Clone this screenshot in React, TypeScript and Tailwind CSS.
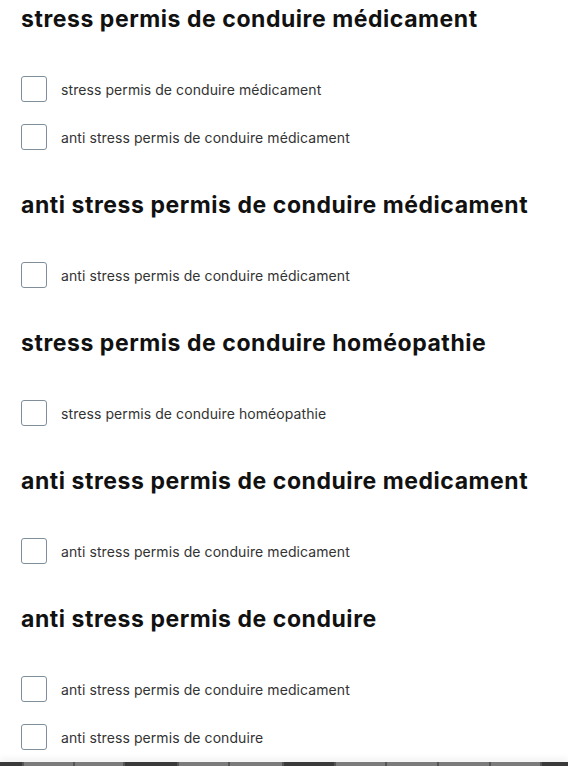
const sections: { title: string; items: string[] }[] = [
  {
    title: "stress permis de conduire médicament",
    items: ["stress permis de conduire médicament", "anti stress permis de conduire médicament"],
  },
  {
    title: "anti stress permis de conduire médicament",
    items: ["anti stress permis de conduire médicament"],
  },
  {
    title: "stress permis de conduire homéopathie",
    items: ["stress permis de conduire homéopathie"],
  },
  {
    title: "anti stress permis de conduire medicament",
    items: ["anti stress permis de conduire medicament"],
  },
  {
    title: "anti stress permis de conduire",
    items: ["anti stress permis de conduire medicament", "anti stress permis de conduire"],
  },
];

// bottom bar segments, dark or light
const segments = [
  { w: 22, dark: true },
  { w: 50, dark: false },
  { w: 48, dark: false },
  { w: 52, dark: true },
  { w: 50, dark: false },
  { w: 52, dark: false },
  { w: 50, dark: true },
  { w: 50, dark: false },
  { w: 50, dark: false },
  { w: 50, dark: false },
  { w: 50, dark: false },
  { w: 26, dark: true },
];

export default function App() {
  return (
    <div className="relative h-[766px] w-[568px] overflow-hidden bg-white font-['Inter',sans-serif]">
      <div className="flex flex-col px-[21px]">
        {sections.map((s, i) => (
          <div key={i} className="flex flex-col pb-[25px]">
            <h2 className="mb-[27px] h-[38px] whitespace-nowrap text-[23px] font-bold leading-[38px] tracking-[0.55px] text-[#111]">
              {s.title}
            </h2>
            {s.items.map((it, j) => (
              <label key={j} className="flex h-12 items-center">
                <span className="h-[26px] w-[26px] shrink-0 rounded-[3px] border border-[#7f8e9b] bg-white" />
                <span className="ml-[14px] text-[14px] tracking-[0.08px] text-[#333]">{it}</span>
              </label>
            ))}
          </div>
        ))}
      </div>
      <div className="absolute bottom-0 left-0 flex h-[4px] w-full gap-[2px] bg-[#555] shadow-[0_-3px_6px_rgba(0,0,0,0.08)]">
        {segments.map((g, i) => (
          <div key={i} className={g.dark ? "h-full bg-[#3a3a3a]" : "h-full bg-[#7b7b7b]"} style={{ width: g.w }} />
        ))}
      </div>
    </div>
  );
}
